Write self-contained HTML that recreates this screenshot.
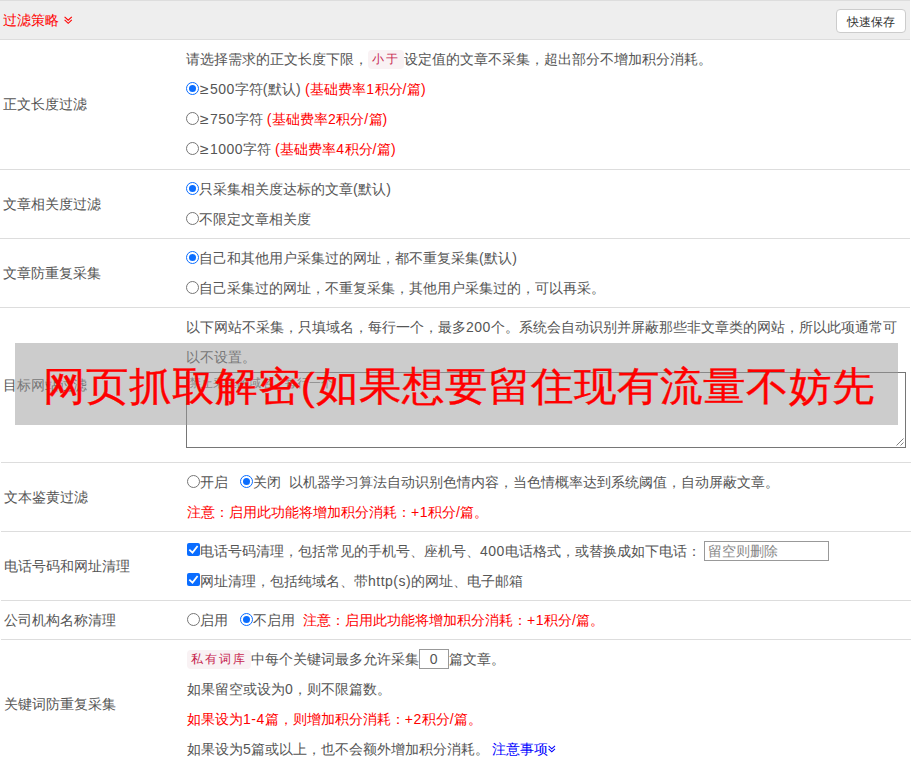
<!DOCTYPE html>
<html><head><meta charset="utf-8">
<style>
*{box-sizing:border-box;margin:0;padding:0}
html,body{width:912px;height:768px;overflow:hidden;background:#fff}
body{font-family:"Liberation Sans",sans-serif;font-size:14px;color:#555;position:relative}
.hdr{position:absolute;left:0;top:0;width:910px;height:40px;background:#eee;border-top:1px solid #ddd;border-bottom:1px solid #ddd}
.hdr .t{position:absolute;left:3px;top:0;line-height:38px;color:#f00}
.btn{position:absolute;left:836px;top:8px;width:70px;height:24px;border:1px solid #ccc;border-radius:4px;background:#fff;color:#333;font-size:12px;line-height:22px;padding-top:1px;text-align:center}
.row{position:absolute;left:0;width:910px;border-bottom:1px solid #ddd}
.lab{position:absolute;left:3px;top:1px;bottom:0;display:flex;align-items:center}
.ln{position:absolute;left:186px;height:30px;line-height:30px;white-space:nowrap}
.red{color:#f00}
.l{letter-spacing:0.5px}
.blue{color:#00f}
.rd{display:inline-block;width:13px;height:13px;border-radius:50%;border:1px solid #767676;vertical-align:middle;position:relative;top:-2px;background:#fff}
.rd.on{border:1.3px solid #0a6dff}
.rd.on::after{content:"";position:absolute;left:2px;top:2px;width:7px;height:7px;border-radius:50%;background:#0a6dff}
.cb{display:inline-block;width:13px;height:13px;border-radius:2px;background:#0a6dff;vertical-align:middle;position:relative;top:-3px}
.code{display:inline-block;background:#f9f2f4;color:#c7254e;border-radius:4px;font-size:12px;line-height:19px;padding:0 2px 0 4px;letter-spacing:2px;width:36px;position:relative;top:-1px}
.ge{display:inline-block;width:11px;text-indent:1px;transform:scaleX(1.12);transform-origin:1px 50%}
.ta{position:absolute;left:186px;top:64px;width:720px;height:76px;border:1px solid #767676;background:#fff}
.ph{color:#757575}
.ph2{color:#888;padding-left:3px}
.inp{display:inline-block;border:1px solid #999;height:20px;line-height:18px;vertical-align:middle;background:#fff;position:relative;top:-1px}
.ov{position:absolute;left:15px;top:343px;width:883px;height:82px;background:rgba(153,153,153,0.5)}
.ov .t{position:absolute;left:0;right:0;top:3px;height:82px;line-height:82px;text-align:center;color:#f00;font-size:42px;white-space:nowrap;letter-spacing:1.05px;-webkit-text-stroke:0.35px #f00;transform:scaleY(0.94);padding-left:5px}
</style></head><body>
<div class="hdr"><div class="t">过滤策略</div><svg style="position:absolute;left:64px;top:15px" width="9" height="9" viewBox="0 0 9 9"><path d="M0.6 0.8 L4.2 4.2 L7.8 0.8 M0.6 3.9 L4.2 7.3 L7.8 3.9" fill="none" stroke="#f00" stroke-width="1.1"/></svg><div class="btn">快速保存</div></div>

<div class="row" style="top:40px;height:130px">
  <div class="lab">正文长度过滤</div>
  <div class="ln" style="top:4px">请选择需求的正文长度下限，<span class="code">小于</span>设定值的文章不采集，超出部分不增加积分消耗。</div>
  <div class="ln" style="top:34px"><span class="rd on"></span><span class="ge">≥</span><span class="l">500</span>字符<span class="l">(</span>默认<span class="l">)</span> <span class="red"><span class="l">(</span>基础费率<span class="l">1</span>积分<span class="l">/</span>篇<span class="l">)</span></span></div>
  <div class="ln" style="top:64px"><span class="rd"></span><span class="ge">≥</span><span class="l">750</span>字符 <span class="red"><span class="l">(</span>基础费率<span class="l">2</span>积分<span class="l">/</span>篇<span class="l">)</span></span></div>
  <div class="ln" style="top:94px"><span class="rd"></span><span class="ge">≥</span><span class="l">1000</span>字符 <span class="red"><span class="l">(</span>基础费率<span class="l">4</span>积分<span class="l">/</span>篇<span class="l">)</span></span></div>
</div>

<div class="row" style="top:170px;height:69px">
  <div class="lab">文章相关度过滤</div>
  <div class="ln" style="top:4px"><span class="rd on"></span>只采集相关度达标的文章<span class="l">(</span>默认<span class="l">)</span></div>
  <div class="ln" style="top:34px"><span class="rd"></span>不限定文章相关度</div>
</div>

<div class="row" style="top:239px;height:69px">
  <div class="lab">文章防重复采集</div>
  <div class="ln" style="top:4px"><span class="rd on"></span>自己和其他用户采集过的网址，都不重复采集<span class="l">(</span>默认<span class="l">)</span></div>
  <div class="ln" style="top:34px"><span class="rd"></span>自己采集过的网址，不重复采集，其他用户采集过的，可以再采。</div>
</div>

<div class="row" style="top:308px;height:155px;border-bottom:0"><div style="position:absolute;left:1px;top:154px;width:910px;height:1px;background:#ddd"></div>
  <div class="lab">目标网站过滤</div>
  <div class="ln" style="top:4px">以下网站不采集，只填域名，每行一个，最多<span class="l">200</span>个。系统会自动识别并屏蔽那些非文章类的网站，所以此项通常可</div>
  <div class="ln" style="top:34px">以不设置。</div>
  <div class="ta"><div class="ph" style="position:absolute;left:2px;top:0px;line-height:20px;font-size:12px">禁止采集的域名，每行一个</div><svg style="position:absolute;left:704px;top:60px" width="14" height="14" viewBox="0 0 14 14"><path d="M5.5 12.5 L12.5 5.5 M9.5 12.5 L12.5 9.5" stroke="#808080" stroke-width="1" fill="none"/></svg></div>
</div>

<div class="row" style="top:463px;height:69px;left:1px">
  <div class="lab">文本鉴黄过滤</div>
  <div class="ln" style="top:4px"><span class="rd"></span>开启<span class="rd on" style="margin-left:12px"></span>关闭<span style="margin-left:8px"></span>以机器学习算法自动识别色情内容，当色情概率达到系统阈值，自动屏蔽文章。</div>
  <div class="ln red" style="top:34px">注意：启用此功能将增加积分消耗：<span class="l">+1</span>积分<span class="l">/</span>篇。</div>
</div>

<div class="row" style="top:532px;height:69px;left:1px">
  <div class="lab">电话号码和网址清理</div>
  <div class="ln" style="top:4px"><span class="cb"><svg width="13" height="13" viewBox="0 0 13 13" style="position:absolute;left:0;top:0"><path d="M2.3 6.6 L5.5 9.6 L10.6 3" fill="none" stroke="#fff" stroke-width="1.8"/></svg></span>电话号码清理，包括常见的手机号、座机号、<span class="l">400</span>电话格式，或替换成如下电话：<span class="inp" style="width:125px;margin-left:3px"><span class="ph2">留空则删除</span></span></div>
  <div class="ln" style="top:34px"><span class="cb"><svg width="13" height="13" viewBox="0 0 13 13" style="position:absolute;left:0;top:0"><path d="M2.3 6.6 L5.5 9.6 L10.6 3" fill="none" stroke="#fff" stroke-width="1.8"/></svg></span>网址清理，包括纯域名、带<span class="l">http(s)</span>的网址、电子邮箱</div>
</div>

<div class="row" style="top:601px;height:39px;left:1px">
  <div class="lab">公司机构名称清理</div>
  <div class="ln" style="top:4px"><span class="rd"></span>启用<span class="rd on" style="margin-left:12px"></span>不启用<span class="red" style="margin-left:8px">注意：启用此功能将增加积分消耗：<span class="l">+1</span>积分<span class="l">/</span>篇。</span></div>
</div>

<div class="row" style="top:640px;height:129px;left:1px">
  <div class="lab">关键词防重复采集</div>
  <div class="ln" style="top:4px"><span class="code" style="width:64px">私有词库</span>中每个关键词最多允许采集<span class="inp" style="width:30px;text-align:center"><span class="l">0</span></span>篇文章。</div>
  <div class="ln" style="top:34px">如果留空或设为<span class="l">0</span>，则不限篇数。</div>
  <div class="ln red" style="top:64px">如果设为<span class="l">1-4</span>篇，则增加积分消耗：<span class="l">+2</span>积分<span class="l">/</span>篇。</div>
  <div class="ln" style="top:94px">如果设为<span class="l">5</span>篇或以上，也不会额外增加积分消耗。<span class="blue" style="margin-left:3px">注意事项</span><svg style="vertical-align:middle;position:relative;top:-1px" width="8" height="8" viewBox="0 0 8 8"><path d="M0.6 0.8 L3.8 3.8 L7 0.8 M0.6 3.8 L3.8 6.8 L7 3.8" fill="none" stroke="#00f" stroke-width="1.1"/></svg></div>
</div>

<div class="ov"><div class="t">网页抓取解密(如果想要留住现有流量不妨先</div></div>
</body></html>
